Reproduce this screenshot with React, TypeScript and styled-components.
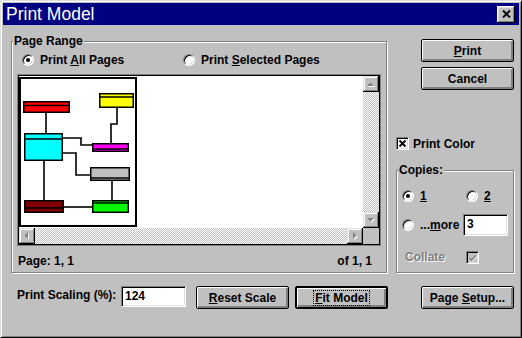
import React from "react";
import styled, { createGlobalStyle } from "styled-components";

const GlobalStyle = createGlobalStyle`
  html, body {
    margin: 0;
    padding: 0;
    background: #c0c0c0;
  }
`;

const Window = styled.div`
  box-sizing: border-box;
  width: 522px;
  height: 338px;
  padding: 2px;
  background: #c0c0c0;
  border: 1px solid;
  border-color: #dfdfdf #000 #000 #dfdfdf;
  box-shadow: inset 1px 1px #fff, inset -1px -1px #808080;
  font: bold 12px/14px "Liberation Sans", Arial, sans-serif;
  color: #000;
`;

const TitleBar = styled.div`
  display: flex;
  align-items: center;
  justify-content: space-between;
  height: 22px;
  padding: 0 4px 0 3px;
  background: #000080;
`;

const TitleText = styled.span`
  color: #fff;
  font: 400 17.5px/22px "Liberation Sans", Arial, sans-serif;
`;

const CloseButton = styled.div`
  box-sizing: border-box;
  width: 18px;
  height: 17px;
  background: #c0c0c0;
  box-shadow: inset -1px -1px #000, inset 1px 1px #fff, inset -2px -2px #808080,
    inset 2px 2px #dfdfdf;
  display: flex;
  align-items: center;
  justify-content: center;
  padding-bottom: 1px;
`;

const Client = styled.div`
  display: grid;
  grid-template-columns: 376px 118px;
  grid-template-rows: 239px 23px;
  column-gap: 9px;
  row-gap: 13px;
  padding: 9px 0 0 8px;
`;

const GroupBox = styled.div<{ $mt: number; $pad: string }>`
  position: relative;
  box-sizing: border-box;
  margin-top: ${(p) => p.$mt}px;
  padding: ${(p) => p.$pad};
  border: 1px solid #808080;
  box-shadow: inset 1px 1px #fff, 1px 1px #fff;
  display: flex;
  flex-direction: column;
`;

const Caption = styled.span`
  position: absolute;
  top: -8px;
  left: 1px;
  padding: 0 1px;
  background: #c0c0c0;
  line-height: 14px;
`;

const RadioRow = styled.div`
  display: flex;
  align-items: center;
  height: 14px;
  padding-left: 5px;
`;

const Option = styled.label<{ $w?: number }>`
  display: flex;
  align-items: center;
  gap: 6px;
  flex: none;
  width: ${(p) => (p.$w ? `${p.$w}px` : "auto")};
`;

const Radio = styled.span<{ $checked?: boolean }>`
  position: relative;
  box-sizing: border-box;
  flex: none;
  width: 12px;
  height: 12px;
  border-radius: 50%;
  background: #fff;
  border: 1px solid;
  border-color: #808080 #fff #fff #808080;
  box-shadow: inset 1px 1px #000, inset -1px -1px #dfdfdf;

  &::after {
    content: "";
    display: ${(p) => (p.$checked ? "block" : "none")};
    position: absolute;
    left: 3px;
    top: 3px;
    width: 4px;
    height: 4px;
    border-radius: 50%;
    background: #000;
  }
`;

const ScrollView = styled.div`
  box-sizing: border-box;
  height: 172px;
  margin-top: 7px;
  padding: 1px;
  border: 1px solid #808080;
  box-shadow: inset 0 0 0 1px #000;
  display: grid;
  grid-template-columns: 1fr 16px;
  grid-template-rows: 1fr 16px;
`;

const Canvas = styled.div`
  background: #fff;
  padding-top: 1px;
  overflow: hidden;
`;

const ScrollBar = styled.div<{ $vertical?: boolean }>`
  display: flex;
  flex-direction: ${(p) => (p.$vertical ? "column" : "row")};
`;

const Track = styled.div`
  flex: 1;
  background: repeating-conic-gradient(#fff 0 25%, #c0c0c0 0 50%) 0 0 / 2px 2px;
`;

const ScrollButton = styled.div`
  flex: none;
  width: 16px;
  height: 16px;
  background: #c0c0c0;
  box-shadow: inset -1px -1px #000, inset 1px 1px #dfdfdf, inset -2px -2px #808080,
    inset 2px 2px #fff;
`;

const Corner = styled.div`
  background: #c0c0c0;
`;

const StatusRow = styled.div`
  display: flex;
  justify-content: space-between;
  height: 14px;
  margin-top: 8px;
  padding: 0 9px 0 1px;
`;

const RightColumn = styled.div`
  display: flex;
  flex-direction: column;
`;

const Button = styled.div<{ $default?: boolean; $mt?: number }>`
  box-sizing: border-box;
  width: 93px;
  height: 23px;
  margin-top: ${(p) => p.$mt ?? 0}px;
  background: #c0c0c0;
  border: ${(p) => (p.$default ? 2 : 1)}px solid #000;
  border-radius: 2px;
  box-shadow: inset 1px 1px #fff, inset -2px -2px #808080;
  display: flex;
  align-items: center;
  justify-content: center;
  flex: none;
`;

const RightButton = styled(Button)`
  align-self: flex-end;
`;

const FocusText = styled.span`
  border: 1px dotted #000;
  padding: 0 1px;
`;

const CheckRow = styled.label<{ $mt?: number; $indent?: number }>`
  display: flex;
  align-items: center;
  gap: 4px;
  height: 13px;
  margin-top: ${(p) => p.$mt ?? 0}px;
`;

const CheckBox = styled.span<{ $disabled?: boolean }>`
  box-sizing: border-box;
  flex: none;
  width: 13px;
  height: 13px;
  border: 1px solid;
  border-color: #808080 #fff #fff #808080;
  box-shadow: inset 1px 1px #000, inset -1px -1px #dfdfdf;
  background: ${(p) => (p.$disabled ? "#c0c0c0" : "#fff")};
  display: flex;
  align-items: center;
  justify-content: center;
`;

const CopiesRow = styled.div<{ $h: number; $mt?: number }>`
  display: flex;
  align-items: center;
  height: ${(p) => p.$h}px;
  margin-top: ${(p) => p.$mt ?? 0}px;
`;

const TextField = styled.div<{ $w: number; $h: number }>`
  box-sizing: border-box;
  flex: none;
  width: ${(p) => p.$w}px;
  height: ${(p) => p.$h}px;
  padding: 2px 0 0 3px;
  background: #fff;
  border: 1px solid;
  border-color: #808080 #fff #fff #808080;
  box-shadow: inset 1px 1px #000, inset -1px -1px #dfdfdf;
`;

const Disabled = styled.span<{ $w?: number }>`
  flex: none;
  width: ${(p) => (p.$w ? `${p.$w}px` : "auto")};
  padding-left: 3px;
  box-sizing: border-box;
  color: #808080;
  text-shadow: 1px 1px #fff;
`;

const BottomRow = styled.div`
  display: flex;
  align-items: flex-start;
`;

const ScaleLabel = styled.span`
  box-sizing: border-box;
  flex: none;
  width: 110px;
  padding-left: 6px;
  margin-top: 2px;
`;

const Gap = styled.span<{ $w: number }>`
  flex: none;
  width: ${(p) => p.$w}px;
`;

const BottomRight = styled.div`
  display: flex;
  justify-content: flex-end;
`;

type Arrow = "up" | "down" | "left" | "right";

const arrowPoints: Record<Arrow, string> = {
  up: "4,10 11,10 7.5,6.5",
  down: "4,6 11,6 7.5,9.5",
  left: "9,4 9,11 5.5,7.5",
  right: "6,4 6,11 9.5,7.5",
};

function ArrowButton({ dir }: { dir: Arrow }) {
  return (
    <ScrollButton>
      <svg width="16" height="16" viewBox="0 0 16 16">
        <polygon points={arrowPoints[dir]} fill="#fff" transform="translate(1,1)" />
        <polygon points={arrowPoints[dir]} fill="#808080" />
      </svg>
    </ScrollButton>
  );
}

interface Entity {
  x: number;
  y: number;
  w: number;
  h: number;
  line: number;
  color: string;
}

// page-local coordinates of the model diagram
const entities: Entity[] = [
  { x: 4, y: 24, w: 47, h: 12, line: 28.5, color: "#ff0000" },
  { x: 80, y: 16, w: 35, h: 15, line: 20, color: "#ffff00" },
  { x: 5, y: 56, w: 39, h: 28, line: 62, color: "#00ffff" },
  { x: 73, y: 66, w: 37, h: 9, line: 72, color: "#ff00ff" },
  { x: 71, y: 90, w: 40, h: 14, line: 101, color: "#c0c0c0" },
  { x: 5, y: 123, w: 40, h: 13, line: 131, color: "#800000" },
  { x: 73, y: 123, w: 37, h: 13, line: 126, color: "#00ff00" },
];

const links = [
  "M27 36 V56",
  "M98 31 V47 H92 V66",
  "M44 61 H62 V68 H73",
  "M44 76 H57 V98 H71",
  "M25 84 V123",
  "M93 104 V123",
  "M45 130 H73",
];

function ModelPage() {
  return (
    <svg width="118" height="150" viewBox="0 0 118 150" style={{ display: "block" }}>
      <rect x="1" y="1" width="116" height="148" fill="#fff" stroke="#000" strokeWidth="2" />
      {links.map((d, i) => (
        <path key={i} d={d} fill="none" stroke="#000" strokeWidth="1.6" />
      ))}
      {entities.map((e, i) => (
        <g key={i}>
          <rect
            x={e.x + 0.75}
            y={e.y + 0.75}
            width={e.w - 1.5}
            height={e.h - 1.5}
            fill={e.color}
            stroke="#000"
            strokeWidth="1.5"
          />
          <line x1={e.x} x2={e.x + e.w} y1={e.line} y2={e.line} stroke="#000" strokeWidth="1.5" />
        </g>
      ))}
    </svg>
  );
}

export default function App() {
  return (
    <Window>
      <GlobalStyle />
      <TitleBar>
        <TitleText>Print Model</TitleText>
        <CloseButton>
          <svg width="9" height="8" viewBox="0 0 9 8">
            <path d="M1 0.5 L8 7.5 M8 0.5 L1 7.5" stroke="#000" strokeWidth="1.9" />
          </svg>
        </CloseButton>
      </TitleBar>

      <Client>
        <GroupBox $mt={7} $pad="11px 5px 4px 5px">
          <Caption>Page Range</Caption>
          <RadioRow>
            <Option $w={161}>
              <Radio $checked />
              <span>
                Print <u>A</u>ll Pages
              </span>
            </Option>
            <Option>
              <Radio />
              <span>
                Print <u>S</u>elected Pages
              </span>
            </Option>
          </RadioRow>

          <ScrollView>
            <Canvas>
              <ModelPage />
            </Canvas>
            <ScrollBar $vertical>
              <ArrowButton dir="up" />
              <Track />
              <ArrowButton dir="down" />
            </ScrollBar>
            <ScrollBar>
              <ArrowButton dir="left" />
              <Track />
              <ArrowButton dir="right" />
            </ScrollBar>
            <Corner />
          </ScrollView>

          <StatusRow>
            <span>Page: 1, 1</span>
            <span>of 1, 1</span>
          </StatusRow>
        </GroupBox>

        <RightColumn>
          <RightButton $mt={5}>
            <span>
              <u>P</u>rint
            </span>
          </RightButton>
          <RightButton $mt={5}>Cancel</RightButton>

          <CheckRow $mt={47}>
            <CheckBox>
              <svg width="9" height="9" viewBox="0 0 9 9">
                <path d="M1.5 1.5 L7.5 7.5 M7.5 1.5 L1.5 7.5" stroke="#000" strokeWidth="1.8" />
              </svg>
            </CheckBox>
            <span>Print Color</span>
          </CheckRow>

          <GroupBox $mt={20} $pad="18px 0 0 5px" style={{ flex: 1 }}>
            <Caption>Copies:</Caption>
            <CopiesRow $h={14}>
              <Option $w={64}>
                <Radio $checked />
                <u>1</u>
              </Option>
              <Option>
                <Radio />
                <u>2</u>
              </Option>
            </CopiesRow>
            <CopiesRow $h={22} $mt={11}>
              <Option $w={61}>
                <Radio />
                <span>
                  ...<u>m</u>ore
                </span>
              </Option>
              <TextField $w={45} $h={22}>3</TextField>
            </CopiesRow>
            <CopiesRow $h={14} $mt={14}>
              <Disabled $w={64}>Collate</Disabled>
              <CheckBox $disabled>
                <svg width="9" height="9" viewBox="0 0 9 9">
                  <path d="M1.5 5 L3.5 7 L8 2.5" fill="none" stroke="#fff" strokeWidth="1.6" transform="translate(0.7,0.7)" />
                  <path d="M1.5 5 L3.5 7 L8 2.5" fill="none" stroke="#808080" strokeWidth="1.6" />
                </svg>
              </CheckBox>
            </CopiesRow>
          </GroupBox>
        </RightColumn>

        <BottomRow>
          <ScaleLabel>Print Scaling (%):</ScaleLabel>
          <TextField $w={65} $h={21}>124</TextField>
          <Gap $w={10} />
          <Button>
            <span>
              <u>R</u>eset Scale
            </span>
          </Button>
          <Gap $w={6} />
          <Button $default>
            <FocusText>
              <u>F</u>it Model
            </FocusText>
          </Button>
        </BottomRow>

        <BottomRight>
          <Button>
            <span>
              Page <u>S</u>etup...
            </span>
          </Button>
        </BottomRight>
      </Client>
    </Window>
  );
}
